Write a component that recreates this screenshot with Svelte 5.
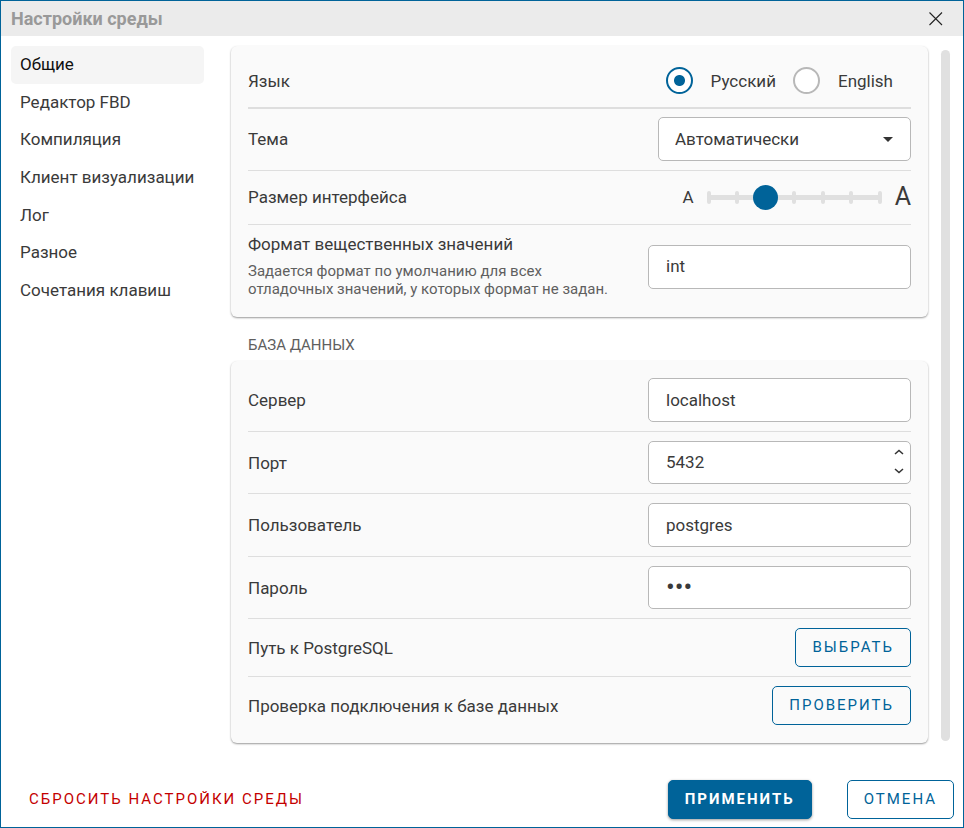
<script lang="ts">
  const sections = [
    'Общие',
    'Редактор FBD',
    'Компиляция',
    'Клиент визуализации',
    'Лог',
    'Разное',
    'Сочетания клавиш',
  ];

  const themes = ['Автоматически', 'Светлая', 'Тёмная'];
  const sizeSteps = [0, 1, 2, 3, 4, 5, 6];

  let activeSection = $state('Общие');
  let language = $state('ru');
  let theme = $state('Автоматически');
  let uiSize = $state(2);
  let realFormat = $state('int');
  let server = $state('localhost');
  let port = $state(5432);
  let user = $state('postgres');
  let password = $state('123');
</script>

<div class="window">
  <header>
    <h1>Настройки среды</h1>
    <button class="close" aria-label="Закрыть">
      <svg width="14" height="14" viewBox="0 0 14 14" aria-hidden="true">
        <path d="M0.5 0.5L13 13M13 0.5L0.5 13" stroke="#222" stroke-width="1.1" fill="none" />
      </svg>
    </button>
  </header>

  <div class="body">
    <nav>
      {#each sections as section}
        <button
          class="nav-item"
          class:active={section === activeSection}
          onclick={() => (activeSection = section)}
        >
          {section}
        </button>
      {/each}
    </nav>

    <main>
      <section class="card">
        <div class="row language" role="radiogroup" aria-labelledby="language-label">
          <span id="language-label">Язык</span>
          <div class="radios">
            <label><input type="radio" name="language" value="ru" bind:group={language} />Русский</label>
            <label><input type="radio" name="language" value="en" bind:group={language} />English</label>
          </div>
        </div>

        <div class="row theme">
          <label for="theme">Тема</label>
          <div class="select">
            <select id="theme" bind:value={theme}>
              {#each themes as name}
                <option value={name}>{name}</option>
              {/each}
            </select>
            <svg width="10" height="5" viewBox="0 0 10 5" aria-hidden="true">
              <path d="M0 0H10L5 5Z" fill="#333" />
            </svg>
          </div>
        </div>

        <div class="row size">
          <label for="ui-size">Размер интерфейса</label>
          <div class="size-control">
            <span>A</span>
            <div class="slider">
              <div class="ticks">
                {#each sizeSteps as step (step)}
                  <i></i>
                {/each}
              </div>
              <input id="ui-size" type="range" min="0" max="6" step="1" bind:value={uiSize} />
            </div>
            <span class="large">A</span>
          </div>
        </div>

        <div class="row format">
          <div class="caption">
            <label for="real-format">Формат вещественных значений</label>
            <p id="real-format-hint">
              Задается формат по умолчанию для всех отладочных значений, у которых формат не задан.
            </p>
          </div>
          <input
            id="real-format"
            class="field"
            type="text"
            aria-describedby="real-format-hint"
            bind:value={realFormat}
          />
        </div>
      </section>

      <h2>БАЗА ДАННЫХ</h2>

      <section class="card">
        <div class="row">
          <label for="server">Сервер</label>
          <input id="server" class="field" type="text" bind:value={server} />
        </div>

        <div class="row">
          <label for="port">Порт</label>
          <div class="number">
            <input id="port" class="field" type="number" bind:value={port} />
            <div class="spin">
              <button aria-label="Увеличить" onclick={() => (port += 1)}>
                <svg width="10" height="6" viewBox="0 0 10 6" aria-hidden="true">
                  <path d="M1 5L5 1.4L9 5" stroke="#333" stroke-width="1.5" fill="none" />
                </svg>
              </button>
              <button aria-label="Уменьшить" onclick={() => (port -= 1)}>
                <svg width="10" height="6" viewBox="0 0 10 6" aria-hidden="true">
                  <path d="M1 1L5 4.6L9 1" stroke="#333" stroke-width="1.5" fill="none" />
                </svg>
              </button>
            </div>
          </div>
        </div>

        <div class="row">
          <label for="user">Пользователь</label>
          <input id="user" class="field" type="text" bind:value={user} />
        </div>

        <div class="row">
          <label for="password">Пароль</label>
          <input id="password" class="field" type="password" bind:value={password} />
        </div>

        <div class="row">
          <span>Путь к PostgreSQL</span>
          <button class="btn outlined">ВЫБРАТЬ</button>
        </div>

        <div class="row">
          <span>Проверка подключения к базе данных</span>
          <button class="btn outlined">ПРОВЕРИТЬ</button>
        </div>
      </section>
    </main>

    <div class="scrollbar" aria-hidden="true"></div>
  </div>

  <footer>
    <button class="btn reset">СБРОСИТЬ НАСТРОЙКИ СРЕДЫ</button>
    <button class="btn filled">ПРИМЕНИТЬ</button>
    <button class="btn outlined">ОТМЕНА</button>
  </footer>
</div>

<style>
  :global(body) {
    background: #fff;
  }

  .window {
    display: flex;
    flex-direction: column;
    box-sizing: border-box;
    min-height: 100vh;
    border: 1px solid #006399;
    background: #fff;
    color: #3a3a3a;
    font-family: Roboto, sans-serif;
    font-size: 17px;
    line-height: 24px;
  }

  button, input, select {
    box-sizing: border-box;
    margin: 0;
    font: inherit;
    color: inherit;
  }

  button {
    cursor: pointer;
  }

  header {
    display: flex;
    align-items: center;
    justify-content: space-between;
    height: 35px;
    padding: 0 15px 0 10px;
    background: #ebebeb;
  }

  h1 {
    margin: 0;
    font-size: 18px;
    font-weight: 700;
    color: #999;
  }

  .close {
    display: flex;
    padding: 5px;
    border: none;
    background: none;
  }

  .body {
    display: flex;
    flex: 1;
    padding: 10px 13px 0 10px;
  }

  nav {
    display: grid;
    grid-template-columns: minmax(0, 1fr);
    grid-auto-rows: 1fr;
    flex: none;
    align-self: flex-start;
    width: 193px;
    height: 263px;
    margin-right: 27px;
  }

  .nav-item {
    padding: 0 9px 1px;
    border: none;
    border-radius: 5px;
    background: none;
    text-align: left;
    white-space: nowrap;
  }

  .nav-item.active {
    background: #f5f5f5;
    color: #111;
  }

  main {
    flex: 1;
    min-width: 0;
  }

  .scrollbar {
    flex: none;
    width: 9px;
    margin: 4px 0 2px 13px;
    border-radius: 5px;
    background: #e0e0e0;
  }

  .card {
    padding: 8px 17px 9px;
    border-radius: 6px;
    background: #fafafa;
    box-shadow: 0 1px 2px rgba(0, 0, 0, 0.4);
  }

  h2 {
    margin: 18px 17px 6px;
    font-size: 15px;
    font-weight: 400;
    line-height: 20px;
    color: #5f5f5f;
  }

  .row {
    display: flex;
    align-items: center;
    justify-content: space-between;
    gap: 16px;
    padding: 9px 0;
    border-bottom: 1px solid #dedede;
  }

  .row:last-child {
    border-bottom: none;
  }

  .row.language {
    padding: 13px 0;
    border-bottom-width: 2px;
  }

  .row.theme {
    padding-top: 8px;
  }

  .row.size {
    padding: 14px 0 15px;
  }

  .row.format {
    padding: 7px 0;
  }

  .radios {
    display: flex;
    gap: 17px;
    padding-right: 18px;
  }

  .radios label {
    display: flex;
    align-items: center;
    gap: 18px;
  }

  input[type='radio'] {
    appearance: none;
    width: 27px;
    height: 27px;
    border: 2px solid #b8b8b8;
    border-radius: 50%;
    background: #fff;
  }

  input[type='radio']:checked {
    border-color: #006399;
    background: radial-gradient(circle, #006399 5px, #fff 6px);
  }

  .select {
    position: relative;
    width: 253px;
  }

  .select svg {
    position: absolute;
    top: 20px;
    right: 18px;
    pointer-events: none;
  }

  select {
    appearance: none;
    display: block;
    width: 100%;
    height: 44px;
    padding: 0 36px 0 16px;
    border: 1px solid #b8b8b8;
    border-radius: 5px;
    background: #fff;
  }

  .field {
    display: block;
    width: 263px;
    height: 44px;
    padding: 0 17px 1px;
    border: 1px solid #b8b8b8;
    border-radius: 5px;
    background: #fff;
  }

  .field[type='number'],
  .field[type='password'] {
    height: 43px;
  }

  .field[type='password'] {
    font-size: 26px;
  }

  .size-control {
    display: flex;
    align-items: center;
    gap: 13px;
  }

  .large {
    font-size: 25px;
  }

  .slider {
    position: relative;
    width: 175px;
    height: 24px;
  }

  .ticks {
    display: flex;
    align-items: center;
    justify-content: space-between;
    height: 100%;
    background: linear-gradient(#e0e0e0, #e0e0e0) center / 100% 5px no-repeat;
  }

  .ticks i {
    width: 4px;
    height: 13px;
    border-radius: 2px;
    background: #e0e0e0;
  }

  input[type='range'] {
    appearance: none;
    position: absolute;
    top: 0;
    left: -11px;
    width: calc(100% + 22px);
    height: 100%;
    background: none;
  }

  input[type='range']::-webkit-slider-thumb {
    appearance: none;
    width: 25px;
    height: 25px;
    border-radius: 50%;
    background: #006399;
  }

  .caption {
    max-width: 370px;
  }

  .caption p {
    margin: 6px 0 3px;
    font-size: 15px;
    line-height: 18px;
    color: #5f5f5f;
  }

  .number {
    position: relative;
  }

  .number input {
    appearance: textfield;
  }

  .number input::-webkit-inner-spin-button {
    appearance: none;
  }

  .spin {
    position: absolute;
    top: 1px;
    right: 4px;
    bottom: 3px;
    display: flex;
    flex-direction: column;
  }

  .spin button {
    display: flex;
    flex: 1;
    align-items: center;
    padding: 0 3px;
    border: none;
    background: none;
  }

  .btn {
    height: 39px;
    padding: 0 16px 2px;
    border: 1px solid transparent;
    border-radius: 5px;
    background: none;
    font-size: 15px;
    letter-spacing: 2px;
  }

  .outlined {
    border-color: #006399;
    color: #006399;
  }

  .filled {
    border-color: #006399;
    background: #006399;
    color: #fff;
    font-weight: 700;
    box-shadow: 0 1px 3px rgba(0, 0, 0, 0.4);
  }

  .reset {
    margin-right: auto;
    color: #c40000;
  }

  footer {
    display: flex;
    align-items: center;
    gap: 35px;
    padding: 37px 9px 8px 11px;
  }
</style>
